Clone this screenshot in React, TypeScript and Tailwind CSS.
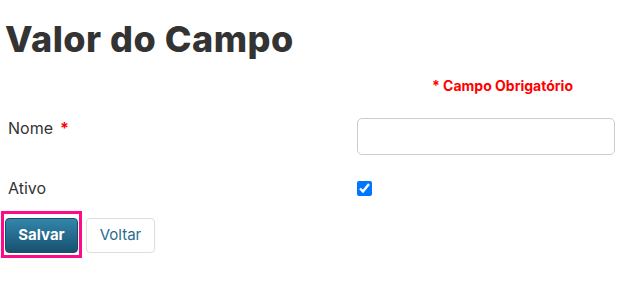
import React from "react";

export default function App() {
  return (
    <div
      className="w-[622px] h-[283px] bg-white text-[#333333] overflow-hidden"
      style={{ fontFamily: "Inter, 'Noto Sans', sans-serif" }}
    >
      <div className="pl-[5px] pt-[17px]">
        <h1 className="text-[36px] leading-[44px] font-extrabold tracking-[0.5px] text-[#333333]">
          Valor do Campo
        </h1>
      </div>
      <div className="flex justify-end pr-[49px] mt-[16px]">
        <span className="text-[14px] leading-[18px] font-bold text-[#ff0000]">
          * Campo Obrigatório
        </span>
      </div>
      <div className="flex items-start mt-[23px] pl-[8px]">
        <div className="w-[349px] flex items-start gap-[7px] text-[16px] leading-[20px] text-[#333333]">
          <span>Nome</span>
          <span className="text-[#ff0000] font-bold">*</span>
        </div>
        <input
          type="text"
          className="w-[258px] h-[37px] border border-[#cccccc] rounded-[5px] px-2 text-[14px] outline-none"
        />
      </div>
      <div className="flex items-center h-[20px] mt-[23px] pl-[8px]">
        <div className="w-[349px] text-[16px] leading-[20px] text-[#333333]">Ativo</div>
        <input
          type="checkbox"
          defaultChecked
          className="w-[15px] h-[15px] m-0 accent-[#0075ff]"
        />
      </div>
      <div className="flex items-start mt-[13px] pl-[1px] gap-[4px]">
        <div className="border-[3px] border-[#ff0a8c] pt-[4px] pb-[2px] pl-px pr-px">
          <button className="w-[73px] h-[35px] rounded-[4px] border border-[#174f6a] bg-gradient-to-b from-[#3386ad] to-[#185170] text-white font-bold text-[15px]">
            Salvar
          </button>
        </div>
        <button className="mt-[7px] w-[69px] h-[35px] rounded-[4px] border border-[#dddddd] bg-white text-[#2a6b8c] text-[15px]">
          Voltar
        </button>
      </div>
    </div>
  );
}
